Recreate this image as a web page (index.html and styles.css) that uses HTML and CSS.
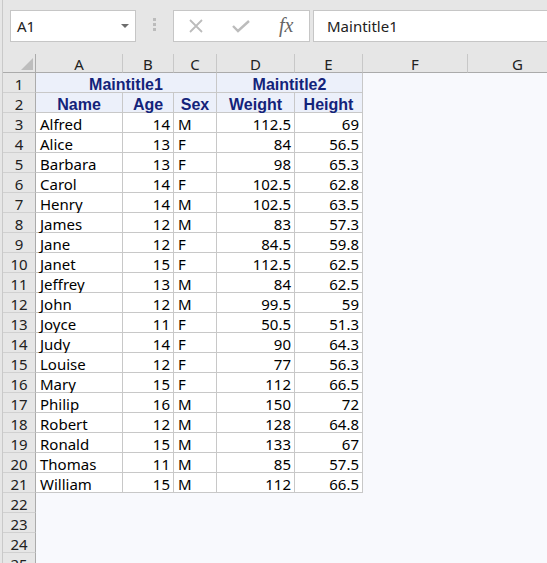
FILE: index.html
```html
<!DOCTYPE html>
<html lang="en">
<head>
    <meta charset="UTF-8">
    <meta name="viewport" content="width=device-width, initial-scale=1.0">
    <link rel="stylesheet" href="styles.css">
    <title>Sheet</title>
</head>
<body>
    <div class="window">
        <!-- barra de formulas -->
        <div class="toolbar">
            <div class="name-box">
                <span>A1</span>
                <span class="caret"></span>
            </div>
            <div class="grip">
                <i></i><i></i><i></i>
            </div>
            <div class="fx-group">
                <svg class="icon" width="16" height="14" viewBox="0 0 16 14">
                    <path d="M2 1 L14 13 M14 1 L2 13" stroke="#bcbcbc" stroke-width="1.8" fill="none"/>
                </svg>
                <svg class="icon" width="18" height="13" viewBox="0 0 18 13">
                    <path d="M1 6 L6 11 L17 1" stroke="#bcbcbc" stroke-width="2.4" fill="none"/>
                </svg>
                <span class="fx">fx</span>
            </div>
            <div class="formula">Maintitle1</div>
        </div>

        <div class="sheet" id="sheet">
            <div class="corner"><span class="tri"></span></div>
            <div class="col-head">A</div>
            <div class="col-head">B</div>
            <div class="col-head">C</div>
            <div class="col-head">D</div>
            <div class="col-head">E</div>
            <div class="col-head">F</div>
            <div class="col-head">G</div>

            <div class="row-head">1</div>
            <div class="cell title span3">Maintitle1</div>
            <div class="cell title span2">Maintitle2</div>
            <div class="empty"></div>
            <div class="empty"></div>

            <div class="row-head">2</div>
            <div class="cell title">Name</div>
            <div class="cell title">Age</div>
            <div class="cell title">Sex</div>
            <div class="cell title">Weight</div>
            <div class="cell title">Height</div>
            <div class="empty"></div>
            <div class="empty"></div>
        </div>
    </div>

    <script>
const students = [
    ["Alfred", 14, "M", 112.5, 69],
    ["Alice", 13, "F", 84, 56.5],
    ["Barbara", 13, "F", 98, 65.3],
    ["Carol", 14, "F", 102.5, 62.8],
    ["Henry", 14, "M", 102.5, 63.5],
    ["James", 12, "M", 83, 57.3],
    ["Jane", 12, "F", 84.5, 59.8],
    ["Janet", 15, "F", 112.5, 62.5],
    ["Jeffrey", 13, "M", 84, 62.5],
    ["John", 12, "M", 99.5, 59],
    ["Joyce", 11, "F", 50.5, 51.3],
    ["Judy", 14, "F", 90, 64.3],
    ["Louise", 12, "F", 77, 56.3],
    ["Mary", 15, "F", 112, 66.5],
    ["Philip", 16, "M", 150, 72],
    ["Robert", 12, "M", 128, 64.8],
    ["Ronald", 15, "M", 133, 67],
    ["Thomas", 11, "M", 85, 57.5],
    ["William", 15, "M", 112, 66.5]
];

const sheet = document.getElementById("sheet");
let html = "";

students.forEach(function (s, i) {
    html += `<div class="row-head">${i + 3}</div>`;
    s.forEach(function (v) {
        const cls = typeof v === "number" ? "cell num" : "cell";
        html += `<div class="${cls}">${v}</div>`;
    });
    html += `<div class="empty"></div><div class="empty"></div>`;
});

// linhas vazias no fim
for (let r = 22; r <= 25; r++) {
    html += `<div class="row-head">${r}</div>`;
    html += `<div class="empty wide"></div>`;
}

sheet.insertAdjacentHTML("beforeend", html);
    </script>
</body>
</html>
```

FILE: styles.css
```css
body {
    margin: 0;
    height: 563px;
    overflow: hidden;
    background-color: #e6e6e6;
    font-family: 'Noto Sans', sans-serif;
}

.window {
    margin-left: 2px;
    border-left: 1px solid #c9c9c9;
    height: 100%;
}

.toolbar {
    display: flex;
    align-items: flex-start;
    height: 54px;
    padding: 10px 0 0 7px;
    box-sizing: border-box;
}

.name-box {
    display: flex;
    align-items: center;
    justify-content: space-between;
    width: 126px;
    height: 32px;
    padding: 0 6px 0 6px;
    box-sizing: border-box;
    background-color: #fff;
    border: 1px solid #c6c6c6;
    font-size: 15px;
    color: #222;
}

.caret {
    width: 0;
    height: 0;
    border-left: 4px solid transparent;
    border-right: 4px solid transparent;
    border-top: 4px solid #6d6d6d;
}

.grip {
    display: flex;
    flex-direction: column;
    gap: 2px;
    margin: 8px 17px 0 17px;
}

.grip i {
    display: block;
    width: 3px;
    height: 3px;
    background-color: #bcbcbc;
}

.fx-group {
    display: flex;
    align-items: center;
    width: 137px;
    height: 32px;
    padding-left: 14px;
    box-sizing: border-box;
    background-color: #fff;
    border: 1px solid #c6c6c6;
}

.fx-group .icon {
    margin-right: 28px;
}

.fx-group .icon + .icon {
    margin-right: 29px;
}

.fx {
    font-family: 'Liberation Serif', serif;
    font-style: italic;
    font-size: 20px;
    color: #666;
    margin-top: -1px;
}

.formula {
    flex: 1;
    height: 32px;
    margin-left: 3px;
    padding-left: 13px;
    box-sizing: border-box;
    background-color: #fff;
    border: 1px solid #c6c6c6;
    border-right: none;
    font-size: 15px;
    line-height: 30px;
    color: #222;
}

.sheet {
    display: grid;
    grid-template-columns: 33px 87px 51px 43px 78px 68px 105px 100px;
    grid-template-rows: 19px;
    grid-auto-rows: 20px;
    background-color: #f8f9fd;
}

.sheet > div {
    box-sizing: border-box;
    white-space: nowrap;
}

.corner {
    position: relative;
    background-color: #e6e6e6;
    border-right: 1px solid #ababab;
    border-bottom: 1px solid #ababab;
}

.corner .tri {
    position: absolute;
    right: 2px;
    bottom: 2px;
    width: 0;
    height: 0;
    border-left: 12px solid transparent;
    border-bottom: 12px solid #bdbdbd;
}

.col-head {
    background-color: #e6e6e6;
    border-right: 1px solid #c8c8c8;
    border-bottom: 1px solid #ababab;
    text-align: center;
    font-size: 15px;
    line-height: 19px;
    padding-top: 1px;
    color: #222;
}

.row-head {
    background-color: #e6e6e6;
    border-right: 1px solid #ababab;
    border-bottom: 1px solid #d0d0d0;
    text-align: center;
    font-size: 15px;
    line-height: 19px;
    padding-top: 2px;
    color: #222;
}

.cell {
    background-color: #fff;
    border-right: 1px solid #c8c8c8;
    border-bottom: 1px solid #c8c8c8;
    padding: 2px 4px 0 4px;
    font-size: 15px;
    line-height: 19px;
    color: #000;
}

.cell.num {
    text-align: right;
    padding-right: 3px;
}

.cell.title {
    background-color: #ecf0fa;
    color: #13237a;
    font-family: 'Liberation Sans', Arial, sans-serif;
    font-weight: bold;
    font-size: 16px;
    text-align: center;
    padding: 2px 0 0 0;
}

.span3 {
    grid-column: span 3;
}

.span2 {
    grid-column: span 2;
}

.empty.wide {
    grid-column: span 7;
}
```
